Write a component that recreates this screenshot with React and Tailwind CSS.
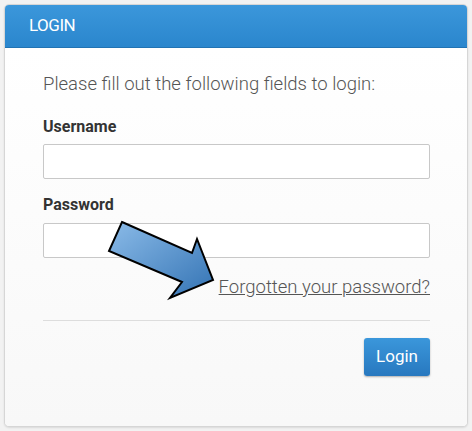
import React from "react";

export default function App() {
  return (
    <div className="w-[472px] h-[431px] bg-[#f2f2f2] p-[4px] font-['Roboto',sans-serif] relative">
      <div className="h-[423px] rounded-[5px] border border-[#d6d6d6] bg-[#fafafa] overflow-hidden flex flex-col shadow-[0_1px_2px_rgba(0,0,0,0.1)]">
        <div className="h-[43px] shrink-0 bg-gradient-to-b from-[#3b97db] to-[#2a86cd] border-b border-[#2173b3] flex items-center pl-[24px]">
          <span className="text-white text-[17px] tracking-[-0.5px]">LOGIN</span>
        </div>
        <div className="flex-1 bg-gradient-to-b from-white to-[#f8f8f8] px-[38px] pt-[24px]">
          <p className="text-[#555] text-[18.5px] leading-[24px] font-light">Please fill out the following fields to login:</p>
          <div className="mt-[21px]">
            <label className="block text-[#333] text-[16px] font-bold leading-[20px]">Username</label>
            <input className="mt-[7px] block w-[387px] h-[35px] border border-[#c8c8c8] rounded-[2px] bg-white" />
          </div>
          <div className="mt-[16px]">
            <label className="block text-[#333] text-[16px] font-bold leading-[20px]">Password</label>
            <input type="password" className="mt-[8px] block w-[387px] h-[35px] border border-[#c8c8c8] rounded-[2px] bg-white" />
          </div>
          <div className="w-[387px] flex justify-end mt-[18px]">
            <a className="text-[#555] text-[18.5px] leading-[22px] underline font-light">Forgotten your password?</a>
          </div>
          <div className="w-[387px] h-px bg-[#ddd] mt-[22px]" />
          <div className="w-[387px] flex justify-end mt-[17px]">
            <button className="h-[38px] px-[12px] rounded-[3px] bg-gradient-to-b from-[#3b97db] to-[#2878bf] text-white text-[17px] shadow-[0_1px_2px_rgba(0,0,0,0.3)]">Login</button>
          </div>
        </div>
      </div>
      <svg className="absolute left-0 top-0 pointer-events-none" width="472" height="431">
        <defs>
          <linearGradient id="ag" x1="0" y1="0" x2="1" y2="1">
            <stop offset="0" stopColor="#8bbbe8" />
            <stop offset="1" stopColor="#3373b4" />
          </linearGradient>
        </defs>
        <polygon
          points="122,222 192,253 197,239 213,280 170,298 182,282 109,251"
          fill="url(#ag)"
          stroke="#000"
          strokeWidth="2"
          strokeLinejoin="miter"
        />
      </svg>
    </div>
  );
}
